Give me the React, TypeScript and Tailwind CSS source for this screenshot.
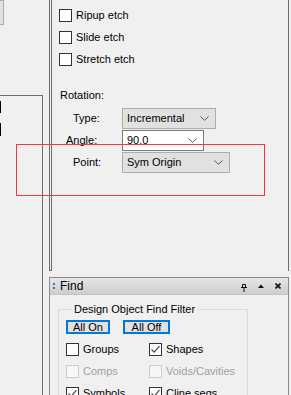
function Check() {
    return (
        <svg width="11" height="11" viewBox="0 0 11 11" className="block">
            <path d="M1.5 5.5 L4.2 8.2 L9.5 2.2" fill="none" stroke="#4a4a4a" strokeWidth="1.2" />
        </svg>
    );
}

function CheckBox({ label, checked = false, disabled = false }: { label: string; checked?: boolean; disabled?: boolean }) {
    return (
        <div className="flex items-center h-[13px]">
            <div
                className={
                    disabled
                        ? "w-[13px] h-[13px] border border-[#cccccc] bg-[#f7f7f7] flex items-center justify-center"
                        : "w-[13px] h-[13px] border border-[#333333] bg-white flex items-center justify-center"
                }
            >
                {checked && <Check />}
            </div>
            <span className={disabled ? "ml-[4px] text-[#a0a0a0]" : "ml-[4px] text-black"}>{label}</span>
        </div>
    );
}

function Chevron() {
    return (
        <svg width="9" height="5" viewBox="0 0 9 5" className="block">
            <path d="M0.5 0.5 L4.5 4.3 L8.5 0.5" fill="none" stroke="#555" strokeWidth="1" />
        </svg>
    );
}

function Dropdown({ value, width, editable = false }: { value: string; width: number; editable?: boolean }) {
    return (
        <div
            className={
                editable
                    ? "h-[21px] flex items-center justify-between pl-[4px] pr-[6px] border border-[#7a7a7a] bg-white"
                    : "h-[21px] flex items-center justify-between pl-[4px] pr-[6px] border border-[#adadad] bg-[#e1e1e1]"
            }
            style={{ width }}
        >
            <span>{value}</span>
            <Chevron />
        </div>
    );
}

export default function App() {
    return (
        <div className="relative w-[291px] h-[395px] overflow-hidden bg-[#f0f0f0] text-[11px] leading-none text-black font-['Liberation_Sans',Arial,sans-serif]">
            <div className="flex h-full">
                {/* left pane */}
                <div className="w-[43px] shrink-0 flex flex-col">
                    <div className="w-[4px] h-[25px] border-y border-r border-[#adadad] bg-[#e1e1e1]" />
                    <div className="mt-[70px] flex-1 border-t border-r border-[#6d6d6d] pt-[5px]">
                        <div className="w-px h-[12px] bg-black" />
                        <div className="w-px h-[13px] bg-black mt-[10px]" />
                    </div>
                </div>

                <div className="w-[240px] shrink-0 ml-[6px] flex flex-col">
                    {/* options panel */}
                    <div className="h-[271px] shrink-0 flex">
                        <div className="w-[3px] border border-t-0 border-[#6d6d6d]" />
                        <div className="flex-1 border-r border-[#6d6d6d] pl-[7px] pt-[9px]">
                            <div className="flex flex-col gap-[9px]">
                                <CheckBox label="Ripup etch" />
                                <CheckBox label="Slide etch" />
                                <CheckBox label="Stretch etch" />
                            </div>
                            <div className="mt-[24px] ml-[1px]">Rotation:</div>
                            <div className="mt-[7px] flex flex-col gap-px">
                                <div className="flex items-center">
                                    <span className="w-[63px] pl-[14px]">Type:</span>
                                    <Dropdown value="Incremental" width={94} />
                                </div>
                                <div className="flex items-center">
                                    <span className="w-[63px] pl-[7px]">Angle:</span>
                                    <Dropdown value="90.0" width={82} editable />
                                </div>
                                <div className="flex items-center">
                                    <span className="w-[63px] pl-[14px]">Point:</span>
                                    <Dropdown value="Sym Origin" width={108} />
                                </div>
                            </div>
                        </div>
                    </div>

                    {/* find panel */}
                    <div className="mt-[6px] flex-1 min-h-0 border-l border-t border-r border-[#8a8a8a]">
                        <div className="h-[17px] flex items-center bg-gradient-to-b from-[#e6e6e6] to-[#cdcdcd] border-b border-[#c4c4c4]">
                            <div className="ml-[3px] flex flex-col gap-[2px]">
                                <div className="w-[2px] h-[2px] bg-[#1e7be0]" />
                                <div className="w-[2px] h-[2px] bg-[#1e7be0]" />
                            </div>
                            <span className="ml-[5px] text-[12px]">Find</span>
                            <div className="ml-auto mr-[7px] flex items-center gap-[11px]">
                                <svg width="6" height="8" viewBox="0 0 6 8" className="block mt-[3px]">
                                    <path d="M1.5 0.5 H4.5 V3.5 M1.5 0.5 V3.5 M0 3.5 H6 M3 3.5 V8" fill="none" stroke="#111" strokeWidth="1" />
                                </svg>
                                <svg width="6" height="4" viewBox="0 0 6 4" className="block">
                                    <path d="M0 4 L3 0.5 L6 4 Z" fill="#111" />
                                </svg>
                                <svg width="6" height="6" viewBox="0 0 6 6" className="block">
                                    <path d="M0.5 0.5 L5.5 5.5 M5.5 0.5 L0.5 5.5" fill="none" stroke="#111" strokeWidth="1.6" />
                                </svg>
                            </div>
                        </div>
                        <fieldset className="ml-[8px] mt-[9px] w-[190px] h-[120px] border border-[#dcdcdc] pl-[7px]">
                            <legend className="ml-[6px] px-[2px] text-[11px]">Design Object Find Filter</legend>
                            <div className="mt-[5px] flex gap-[13px]">
                                <div className="w-[44px] h-[14px] border-2 border-[#0078d7] bg-[#e1e1e1] flex items-center justify-center">All On</div>
                                <div className="w-[47px] h-[14px] border-2 border-[#0078d7] bg-[#e1e1e1] flex items-center justify-center">All Off</div>
                            </div>
                            <div className="mt-[9px] grid grid-cols-[83px_1fr] gap-y-[9px]">
                                <CheckBox label="Groups" />
                                <CheckBox label="Shapes" checked />
                                <CheckBox label="Comps" disabled />
                                <CheckBox label="Voids/Cavities" disabled />
                                <CheckBox label="Symbols" checked />
                                <CheckBox label="Cline segs" checked />
                            </div>
                        </fieldset>
                    </div>
                </div>
            </div>

            {/* annotation */}
            <div className="absolute left-[16px] top-[144px] w-[249px] h-[52px] border border-[#f23a3a]" />
        </div>
    );
}
